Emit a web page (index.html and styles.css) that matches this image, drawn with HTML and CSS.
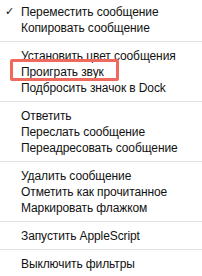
FILE: index.html
```html
<!DOCTYPE html>
<html>
<head>
<meta charset="utf-8">
<link rel="stylesheet" href="styles.css">
</head>
<body>
<div class="menu">
  <div class="item"><span class="check">✓</span>Переместить сообщение</div>
  <div class="item">Копировать сообщение</div>
  <div class="sep"></div>
  <div class="item">Установить цвет сообщения</div>
  <div class="item hl">Проиграть звук<span class="box"></span></div>
  <div class="item">Подбросить значок в Dock</div>
  <div class="sep"></div>
  <div class="item">Ответить</div>
  <div class="item">Переслать сообщение</div>
  <div class="item">Переадресовать сообщение</div>
  <div class="sep"></div>
  <div class="item">Удалить сообщение</div>
  <div class="item">Отметить как прочитанное</div>
  <div class="item">Маркировать флажком</div>
  <div class="sep"></div>
  <div class="item">Запустить AppleScript</div>
  <div class="sep"></div>
  <div class="item">Выключить фильтры</div>
</div>
</body>
</html>
```
FILE: styles.css
```css
html, body {
  margin: 0;
  padding: 0;
  background: #ffffff;
}
.menu {
  width: 202px;
  height: 276px;
  padding-top: 4px;
  box-sizing: border-box;
  font-family: "Liberation Sans", Arial, sans-serif;
  font-size: 12px;
  letter-spacing: -0.1px;
  color: #111111;
  overflow: hidden;
}
.item {
  position: relative;
  height: 16px;
  line-height: 16px;
  padding-left: 21px;
  white-space: nowrap;
}
.check {
  position: absolute;
  left: 5px;
  top: 0;
  font-family: "DejaVu Sans", sans-serif;
  font-size: 11px;
}
.sep {
  height: 12px;
  display: flex;
  align-items: center;
}
.sep::after {
  content: "";
  display: block;
  width: 100%;
  height: 1px;
  background: #e2e2e2;
  margin-top: -1px;
}
.box {
  position: absolute;
  left: 10px;
  width: 109px;
  top: -5px;
  bottom: -1px;
  border: 3px solid #ef6a5c;
  border-radius: 2px;
  box-sizing: border-box;
}
```
